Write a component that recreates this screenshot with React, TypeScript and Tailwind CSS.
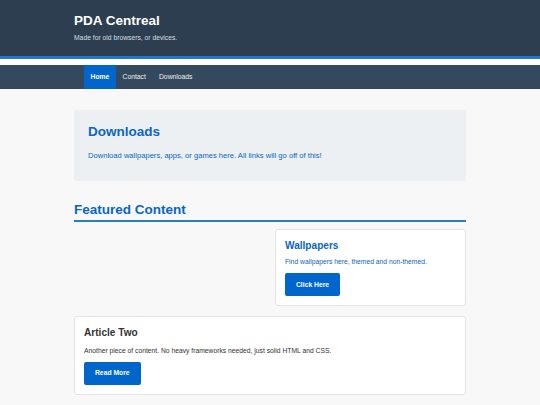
import React from "react";

export default function App() {
  return (
    <div className="min-h-screen bg-[#f8f8f8] font-['Liberation_Sans',Arial,sans-serif]">
      <header className="h-[59px] bg-[#2c3e50] border-b-[3px] border-[#1f78c8]">
        <div className="w-[392px] mx-auto pt-[13px]">
          <h1 className="text-[13.5px] leading-[16px] font-bold text-white">PDA Centreal</h1>
          <p className="mt-[5px] text-[6.75px] leading-[8px] text-[#d9dee3]">Made for old browsers, or devices.</p>
        </div>
      </header>
      <div className="h-[6px] bg-white" />
      <nav className="h-[24px] bg-[#34495e]">
        <div className="w-[392px] mx-auto pl-[10px] flex h-full">
          <a className="flex items-center px-[6.6px] bg-[#0066cc] text-white font-bold text-[6.75px]">Home</a>
          <a className="flex items-center px-[6.6px] text-[#ecf0f1] text-[6.75px]">Contact</a>
          <a className="flex items-center px-[6.6px] text-[#ecf0f1] text-[6.75px]">Downloads</a>
        </div>
      </nav>
      <main className="w-[392px] mx-auto pt-[21px] pb-[10px]">
        <section className="bg-[#ecf0f2] rounded-[2px] px-[14px] pt-[13.5px] pb-[20px]">
          <h2 className="text-[13.5px] leading-[15.5px] font-bold text-[#0a66c2]">Downloads</h2>
          <p className="mt-[11.6px] text-[7.6px] leading-[10.8px] text-[#0a66c2]">
            Download wallpapers, apps, or games here. All links will go off of this!
          </p>
        </section>
        <h2 className="mt-[20.5px] pb-[3px] border-b-2 border-[#2980b9] text-[13.5px] leading-[15.5px] font-bold text-[#0a66c2]">
          Featured Content
        </h2>
        <div className="mt-[7px] grid grid-cols-2 gap-[10px]">
          <div />
          <div className="bg-white border border-[#e4e4e4] rounded-[3px] p-[9px]">
            <h3 className="text-[10.1px] leading-[14px] font-bold text-[#0a66c2]">Wallpapers</h3>
            <p className="mt-[4px] text-[6.75px] leading-[10.8px] text-[#0a66c2]">Find wallpapers here, themed and non-themed.</p>
            <button className="mt-[5.3px] h-[22.3px] px-[11px] bg-[#0066cc] text-white font-bold text-[6.75px] rounded-[2px]">
              Click Here
            </button>
          </div>
          <div className="col-span-2 bg-white border border-[#e4e4e4] rounded-[3px] p-[9px]">
            <h3 className="text-[10.1px] leading-[14px] font-bold text-[#333333]">Article Two</h3>
            <p className="mt-[6px] text-[6.75px] leading-[10.8px] text-[#333333]">
              Another piece of content. No heavy frameworks needed, just solid HTML and CSS.
            </p>
            <button className="mt-[5.8px] h-[22.3px] px-[11px] bg-[#0066cc] text-white font-bold text-[6.75px] rounded-[2px]">
              Read More
            </button>
          </div>
        </div>
      </main>
    </div>
  );
}
